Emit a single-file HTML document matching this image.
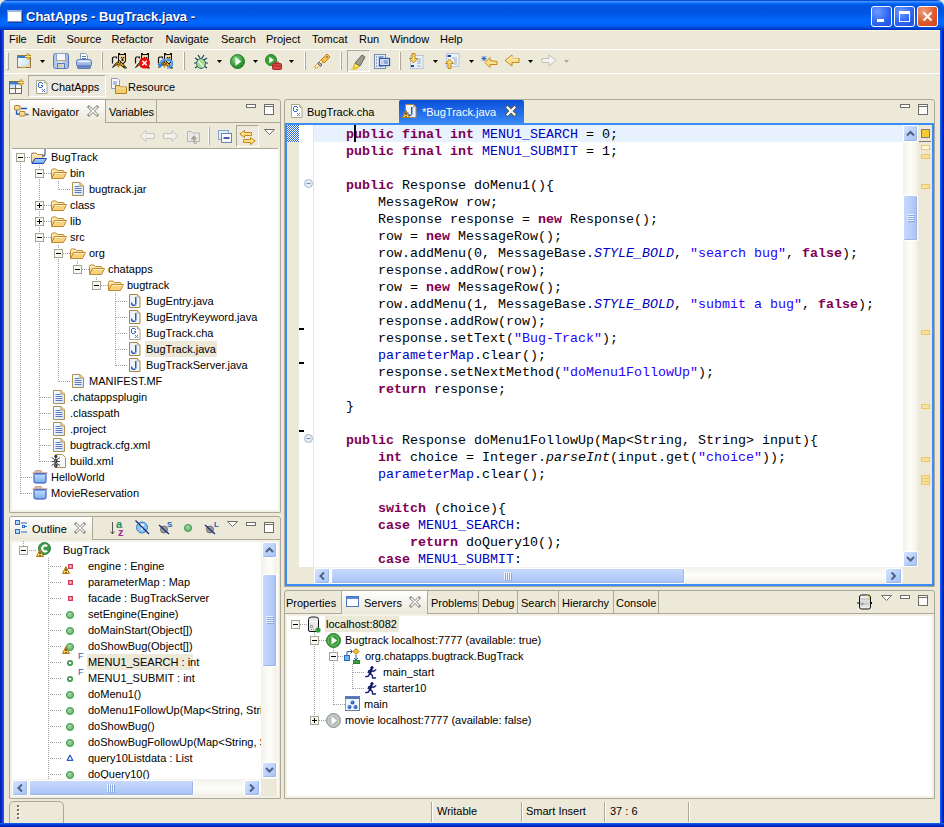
<!DOCTYPE html><html><head><meta charset="utf-8"><style>
*{margin:0;padding:0;box-sizing:border-box}
html,body{width:944px;height:827px;overflow:hidden;background:#ECE9D8;font-family:"Liberation Sans",sans-serif;font-size:11px;color:#000;position:relative}
.abs{position:absolute}
svg.abs{overflow:visible}
.t{position:absolute;white-space:pre;line-height:13px}
body{-webkit-font-smoothing:antialiased}
.m{position:absolute;white-space:pre;font-family:"Liberation Mono",monospace;font-size:13.33px;line-height:17px;left:314px}
.k{color:#7F0055;font-weight:bold}
.f{color:#0000C0}
.s{color:#2A00FF}
.i{font-style:italic}
</style></head><body>
<div class="abs" style="left:0px;top:0px;width:944px;height:30px;border-radius:7px 7px 0 0;background:linear-gradient(#0A4ED8 0px,#0A4ED8 0.5px,#3D8EFF 1.5px,#2A80FF 2.5px,#006AF8 3.5px,#0058E6 5px,#0053DF 8px,#0055E2 13px,#0062F2 18px,#0067FF 21px,#0064FA 25px,#0054E6 27px,#0040D0 28.5px,#0030B8 30px)"></div>
<div class="abs" style="left:4px;top:30px;width:936px;height:1px;background:#FFF6DC"></div>
<div class="abs" style="left:0px;top:30px;width:4px;height:797px;background:linear-gradient(90deg,#0019A8,#0831D9 2px,#166AEE 4px)"></div>
<div class="abs" style="left:940px;top:30px;width:4px;height:797px;background:linear-gradient(90deg,#166AEE,#0831D9 2px,#0019A8 4px)"></div>
<div class="abs" style="left:0px;top:823px;width:944px;height:4px;background:linear-gradient(#166AEE,#0831D9 2px,#0019A8 4px)"></div>
<div class="abs" style="left:7px;top:10px;width:15px;height:12px;background:#fff;border:1px solid #7A94C8;border-top:2px solid #9DB4E6;box-shadow:1px 1px 0 #1A3FA0"></div>
<div class="t" style="left:26px;top:9px;font-size:13px;line-height:16px;font-weight:bold;color:#fff;text-shadow:1px 1px 0 #0A1E7A">ChatApps - BugTrack.java -</div>
<div class="abs" style="left:871px;top:6px;width:21px;height:21px;border:1px solid #fff;border-radius:3px;background:radial-gradient(circle at 30% 25%,#6C9BFF,#2B63F0 60%,#1E4FD8)"></div>
<div class="abs" style="left:894px;top:6px;width:21px;height:21px;border:1px solid #fff;border-radius:3px;background:radial-gradient(circle at 30% 25%,#6C9BFF,#2B63F0 60%,#1E4FD8)"></div>
<div class="abs" style="left:917px;top:6px;width:21px;height:21px;border:1px solid #fff;border-radius:3px;background:radial-gradient(circle at 30% 25%,#F0A080,#E05A2E 55%,#C8401A)"></div>
<div class="abs" style="left:877px;top:19px;width:7px;height:3px;background:#fff"></div>
<div class="abs" style="left:899px;top:11px;width:11px;height:11px;border:1px solid #fff;border-top:3px solid #fff"></div>
<svg class="abs" style="left:922px;top:11px" width="11" height="11" viewBox="0 0 11 11"><path d="M1.5 1.5L9.5 9.5M9.5 1.5L1.5 9.5" stroke="#fff" stroke-width="2"/></svg>
<div class="abs" style="left:4px;top:49px;width:936px;height:1px;background:#fff"></div>
<div class="t" style="left:9px;top:33px;">File</div>
<div class="t" style="left:36.5px;top:33px;">Edit</div>
<div class="t" style="left:66.5px;top:33px;">Source</div>
<div class="t" style="left:111.5px;top:33px;">Refactor</div>
<div class="t" style="left:165.5px;top:33px;">Navigate</div>
<div class="t" style="left:221px;top:33px;">Search</div>
<div class="t" style="left:266px;top:33px;">Project</div>
<div class="t" style="left:312px;top:33px;">Tomcat</div>
<div class="t" style="left:359px;top:33px;">Run</div>
<div class="t" style="left:390px;top:33px;">Window</div>
<div class="t" style="left:440px;top:33px;">Help</div>
<div class="abs" style="left:4px;top:73px;width:936px;height:1px;background:#fff"></div>
<div class="abs" style="left:6px;top:52px;width:3px;height:18px;border-left:1px solid #fff;border-right:1px solid #ACA899;border-bottom:1px solid #ACA899;border-top:1px solid #fff"></div>
<div class="abs" style="left:101px;top:52px;width:1px;height:18px;background:#fff"></div>
<div class="abs" style="left:102px;top:52px;width:1px;height:18px;background:#ACA899"></div>
<div class="abs" style="left:183px;top:52px;width:1px;height:18px;background:#fff"></div>
<div class="abs" style="left:184px;top:52px;width:1px;height:18px;background:#ACA899"></div>
<div class="abs" style="left:304px;top:52px;width:1px;height:18px;background:#fff"></div>
<div class="abs" style="left:305px;top:52px;width:1px;height:18px;background:#ACA899"></div>
<div class="abs" style="left:340px;top:52px;width:1px;height:18px;background:#fff"></div>
<div class="abs" style="left:341px;top:52px;width:1px;height:18px;background:#ACA899"></div>
<div class="abs" style="left:399px;top:52px;width:1px;height:18px;background:#fff"></div>
<div class="abs" style="left:400px;top:52px;width:1px;height:18px;background:#ACA899"></div>
<svg class="abs" style="left:17px;top:53px" width="16" height="16" viewBox="0 0 16 16"><defs><linearGradient id="nw" x1="0" y1="0" x2="1" y2="1"><stop offset="0" stop-color="#F8FCFF"/><stop offset="1" stop-color="#C8E0F4"/></linearGradient></defs><rect x="0.5" y="2.5" width="13" height="12" fill="url(#nw)" stroke="#9A7A40"/><rect x="1" y="3" width="8" height="2" fill="#3A7AD0"/><path d="M12.5 4v6q0 3-4 4h-5" stroke="#F0C850" fill="none"/><path d="M11 0.5v6M8 3.5h6" stroke="#B08020" stroke-width="2.6"/><path d="M11 0.5v6M8 3.5h6" stroke="#FFE070" stroke-width="1"/></svg>
<svg class="abs" style="left:40px;top:60px" width="5" height="3" viewBox="0 0 5 3"><path d="M0 0h5l-2.5 3z" fill="#000"/></svg>
<svg class="abs" style="left:53px;top:53px" width="16" height="16" viewBox="0 0 16 16"><defs><linearGradient id="sv" x1="0" y1="0" x2="1" y2="0"><stop offset="0" stop-color="#A8BEE8"/><stop offset="0.5" stop-color="#D8E4F8"/><stop offset="1" stop-color="#98B0DC"/></linearGradient></defs><rect x="0.5" y="0.5" width="15" height="15" rx="2" fill="url(#sv)" stroke="#5A7AB8"/><rect x="3.5" y="0.5" width="9" height="7" fill="#F4F8FE" stroke="#8AA0C8"/><path d="M4 7.5h8" stroke="#D0A860"/><rect x="4.5" y="10.5" width="7" height="5" fill="#C8D8F0" stroke="#5A7AB8"/><rect x="5.5" y="12" width="3" height="2" fill="#E8C070"/></svg>
<svg class="abs" style="left:76px;top:53px" width="16" height="16" viewBox="0 0 16 16"><defs><linearGradient id="pr" x1="0" y1="0" x2="0" y2="1"><stop offset="0" stop-color="#D8E4F8"/><stop offset="1" stop-color="#7E9CD8"/></linearGradient></defs><path d="M4.5 0.5h5l2 2v6h-7z" fill="#fff" stroke="#8A9AB8"/><path d="M6 3.5h4M6 5.5h4" stroke="#5A7AC0"/><rect x="0.5" y="6.5" width="15" height="7" rx="2" fill="url(#pr)" stroke="#5A78B8"/><rect x="1.5" y="13" width="13" height="2.5" rx="1" fill="#6A8ACC" stroke="#4A68A8" stroke-width="0.8"/><path d="M3 8.5h10" stroke="#fff" stroke-opacity="0.7"/></svg>
<svg class="abs" style="left:111px;top:53px" width="16" height="16" viewBox="0 0 16 16"><path d="M7 0h2v1h4V0h2v8.5L12.5 11h-1.5L7 8z" fill="#111"/><path d="M8 2h6v6l-2 2h-1L8 7.5z" fill="#F2D49A"/><rect x="8.2" y="2" width="1" height="1" fill="#F0A0A0"/><rect x="10" y="4" width="1.2" height="1.2" fill="#111"/><rect x="12" y="4" width="1.2" height="1.2" fill="#111"/><path d="M11.5 5.5v2.5M10.3 7h2.4" stroke="#111" stroke-width="1.1"/><path d="M1.5 14.5L4 11L8.5 7.5L11 10L15.5 15h-2L9.5 12H5z" fill="#F4B010" stroke="#111" stroke-width="0.9" stroke-linejoin="round"/><rect x="7" y="9" width="1" height="1" fill="#111"/><rect x="8.5" y="10" width="1" height="1" fill="#111"/><rect x="6" y="10.5" width="1" height="1" fill="#111"/><rect x="9" y="8.5" width="1" height="1" fill="#111"/><path d="M5.5 5.5V4H2.5L1.5 5v5.5" stroke="#111" stroke-width="1.2" fill="none"/><path d="M6.5 12.5L8 14.5" stroke="#E89000" stroke-width="1.4"/><path d="M12 13l2 1.5" stroke="#111" stroke-width="1"/></svg>
<svg class="abs" style="left:134px;top:53px" width="16" height="16" viewBox="0 0 16 16"><path d="M7 0h2v1h4V0h2v8.5L12.5 11h-1.5L7 8z" fill="#111"/><path d="M8 2h6v6l-2 2h-1L8 7.5z" fill="#F2D49A"/><rect x="8.2" y="2" width="1" height="1" fill="#F0A0A0"/><rect x="10" y="4" width="1.2" height="1.2" fill="#111"/><rect x="12" y="4" width="1.2" height="1.2" fill="#111"/><path d="M11.5 5.5v2.5M10.3 7h2.4" stroke="#111" stroke-width="1.1"/><path d="M1.5 14.5L4 11L8.5 7.5L11 10L15.5 15h-2L9.5 12H5z" fill="#F4B010" stroke="#111" stroke-width="0.9" stroke-linejoin="round"/><rect x="7" y="9" width="1" height="1" fill="#111"/><rect x="8.5" y="10" width="1" height="1" fill="#111"/><rect x="6" y="10.5" width="1" height="1" fill="#111"/><rect x="9" y="8.5" width="1" height="1" fill="#111"/><path d="M5.5 5.5V4H2.5L1.5 5v5.5" stroke="#111" stroke-width="1.2" fill="none"/><path d="M6.5 12.5L8 14.5" stroke="#E89000" stroke-width="1.4"/><path d="M12 13l2 1.5" stroke="#111" stroke-width="1"/><circle cx="10.5" cy="10" r="5.5" fill="#EE0A0A"/><path d="M8.3 7.8l4.4 4.4M12.7 7.8l-4.4 4.4" stroke="#fff" stroke-width="1.6"/></svg>
<svg class="abs" style="left:157px;top:53px" width="16" height="16" viewBox="0 0 16 16"><path d="M7 0h2v1h4V0h2v8.5L12.5 11h-1.5L7 8z" fill="#111"/><path d="M8 2h6v6l-2 2h-1L8 7.5z" fill="#F2D49A"/><rect x="8.2" y="2" width="1" height="1" fill="#F0A0A0"/><rect x="10" y="4" width="1.2" height="1.2" fill="#111"/><rect x="12" y="4" width="1.2" height="1.2" fill="#111"/><path d="M11.5 5.5v2.5M10.3 7h2.4" stroke="#111" stroke-width="1.1"/><path d="M1.5 14.5L4 11L8.5 7.5L11 10L15.5 15h-2L9.5 12H5z" fill="#F4B010" stroke="#111" stroke-width="0.9" stroke-linejoin="round"/><rect x="7" y="9" width="1" height="1" fill="#111"/><rect x="8.5" y="10" width="1" height="1" fill="#111"/><rect x="6" y="10.5" width="1" height="1" fill="#111"/><rect x="9" y="8.5" width="1" height="1" fill="#111"/><path d="M5.5 5.5V4H2.5L1.5 5v5.5" stroke="#111" stroke-width="1.2" fill="none"/><path d="M6.5 12.5L8 14.5" stroke="#E89000" stroke-width="1.4"/><path d="M12 13l2 1.5" stroke="#111" stroke-width="1"/><path d="M3 13.5q0-7 7-7q5 0 5 4q0 4-5 4" stroke="#1E78E8" stroke-width="2.2" fill="none"/><path d="M3 13.5q0-7 7-7q5 0 5 4q0 4-5 4" stroke="#8CD4FF" stroke-width="0.8" fill="none"/><path d="M0.5 11l2.5 4 3-3.5z" fill="#1E78E8"/></svg>
<svg class="abs" style="left:193px;top:54px" width="16" height="16" viewBox="0 0 16 16"><path d="M2 4l3 2M1 9h3M2 14l3-2M14 4l-3 2M15 9h-3M14 14l-3-2M5 1l2 3M11 1l-2 3" stroke="#1A3A4A" stroke-width="1.2"/><ellipse cx="8" cy="9.5" rx="4.5" ry="5" fill="#A8D890" stroke="#2A6A7A"/><path d="M5.5 7l5 6" stroke="#E8F8D8" stroke-width="1.5"/></svg>
<svg class="abs" style="left:217px;top:60px" width="5" height="3" viewBox="0 0 5 3"><path d="M0 0h5l-2.5 3z" fill="#000"/></svg>
<svg class="abs" style="left:230px;top:54px" width="15" height="15" viewBox="0 0 15 15"><defs><radialGradient id="rg" cx="0.4" cy="0.35" r="0.7"><stop offset="0" stop-color="#8ED88E"/><stop offset="0.6" stop-color="#3AA03A"/><stop offset="1" stop-color="#207A20"/></radialGradient></defs><circle cx="7.5" cy="7.5" r="7" fill="url(#rg)" stroke="#2A802A"/><path d="M5.5 3.2L11.2 7.5L5.5 11.8Z" fill="#fff"/><path d="M5.5 3.2L11.2 7.5L5.5 7.5Z" fill="#E0F8E0"/></svg>
<svg class="abs" style="left:253px;top:60px" width="5" height="3" viewBox="0 0 5 3"><path d="M0 0h5l-2.5 3z" fill="#000"/></svg>
<svg class="abs" style="left:265px;top:54px" width="17" height="16" viewBox="0 0 17 16"><circle cx="6" cy="6" r="5.5" fill="#3AA03A" stroke="#2A802A"/><path d="M4.3 2.8L8.8 6L4.3 9.2Z" fill="#fff"/><rect x="7.5" y="9.5" width="9" height="6" rx="1" fill="#D84848" stroke="#A82828"/><path d="M10.5 9.5v-1.5h3v1.5M8 12h8" stroke="#A82828" fill="none"/></svg>
<svg class="abs" style="left:289px;top:60px" width="5" height="3" viewBox="0 0 5 3"><path d="M0 0h5l-2.5 3z" fill="#000"/></svg>
<svg class="abs" style="left:314px;top:54px" width="17" height="15" viewBox="0 0 17 15"><path d="M3 14l-2 0 0-2 9-9 2 2z" fill="#FFF6C0" stroke="#D8A030"/><path d="M3.5 9.5l3 3 1.5-1.5-3-3z" fill="#A8A8B8" stroke="#6A6A78"/><path d="M7 6l3 3 6-6-3-3z" fill="#F8C050" stroke="#C88020"/><circle cx="13" cy="3" r="0.8" fill="#2A4A9A"/></svg>
<div class="abs" style="left:347px;top:50px;width:23px;height:22px;border:1px solid #ACA899;border-right-color:#fff;border-bottom-color:#fff;background:repeating-conic-gradient(#F4F2EA 0 25%,#E4E1D2 0 50%) 0 0/2px 2px"></div>
<svg class="abs" style="left:350px;top:54px" width="17" height="16" viewBox="0 0 17 16"><path d="M3 14l2-5 5 3-2 2z" fill="#F8E060" stroke="#D0B020"/><path d="M5 9l7-8 3 2-5 9z" fill="#9A9A8A" stroke="#6A6A5A"/><path d="M1 15h6" stroke="#E8C830" stroke-width="1.5"/></svg>
<svg class="abs" style="left:374px;top:54px" width="16" height="15" viewBox="0 0 16 15"><rect x="0.5" y="0.5" width="11" height="14" fill="#E8EEF8" stroke="#7A8AB0"/><path d="M2 3h1M4.5 3h5M2 6h1M2 9h1M2 12h1M4.5 12h5" stroke="#3A5AA0"/><rect x="5.5" y="4.5" width="10" height="7" fill="#F4F8FE" stroke="#2A5AB8" stroke-width="1.3"/><path d="M7.5 7h1M9.5 7h4.5M7.5 9h1M9.5 9h4.5" stroke="#2A5AB8"/></svg>
<svg class="abs" style="left:409px;top:53px" width="15" height="16" viewBox="0 0 15 16"><rect x="1.5" y="2.5" width="12.5" height="13" fill="#EEF2F8" stroke="#B8C4D8"/><path d="M8 6h4M8 8h4M8 10h4M8 13h4" stroke="#9AAAC8"/><rect x="2" y="12" width="3" height="2" fill="#1A4A9A"/><path d="M3 0.5h3v5h2.5l-4 4.5-4-4.5h2.5z" fill="#F8D870" stroke="#C08818"/></svg>
<svg class="abs" style="left:433px;top:60px" width="5" height="3" viewBox="0 0 5 3"><path d="M0 0h5l-2.5 3z" fill="#000"/></svg>
<svg class="abs" style="left:445px;top:53px" width="15" height="16" viewBox="0 0 15 16"><rect x="1.5" y="0.5" width="12.5" height="13" fill="#EEF2F8" stroke="#B8C4D8"/><path d="M7 5h5M9 7h3M9 9h3M9 11h3" stroke="#9AAAC8"/><rect x="2.5" y="2" width="3.5" height="2" fill="#1A4A9A"/><path d="M3 15.5h3v-5h2.5l-4-4.5-4 4.5h2.5z" fill="#F8D870" stroke="#C08818"/></svg>
<svg class="abs" style="left:469px;top:60px" width="5" height="3" viewBox="0 0 5 3"><path d="M0 0h5l-2.5 3z" fill="#000"/></svg>
<svg class="abs" style="left:481px;top:55px" width="17" height="13" viewBox="0 0 17 13"><path d="M16 6.5v3h-7v3L4 7.5 9 2.5v3z" fill="#FBE08A" stroke="#C8881A"/><path d="M3 1v5M0.5 3.5h5M1 1.5l4 4M5 1.5l-4 4" stroke="#2A5AB8" stroke-width="0.9"/></svg>
<svg class="abs" style="left:504px;top:54px" width="16" height="13" viewBox="0 0 16 13"><path d="M15 4.5v4h-7v3.5L1 6.5 8 1v3.5z" fill="#FBE08A" stroke="#C8881A"/><path d="M3 6.5l5-4v2.5h6" stroke="#FFF8D8" fill="none"/></svg>
<svg class="abs" style="left:528px;top:60px" width="5" height="3" viewBox="0 0 5 3"><path d="M0 0h5l-2.5 3z" fill="#000"/></svg>
<svg class="abs" style="left:541px;top:54px" width="16" height="13" viewBox="0 0 16 13"><path d="M1 4.5v4h7v3.5l7-5.5L8 1v3.5z" fill="#F4F4F2" stroke="#C0C0BA"/></svg>
<svg class="abs" style="left:564px;top:60px" width="5" height="3" viewBox="0 0 5 3"><path d="M0 0h5l-2.5 3z" fill="#A8A8A0"/></svg>
<div class="abs" style="left:28px;top:75px;width:78px;height:22px;border:1px solid #ACA899;border-right-color:#fff;border-bottom-color:#fff;background:repeating-conic-gradient(#F4F2EA 0 25%,#E4E1D2 0 50%) 0 0/2px 2px"></div>
<div class="t" style="left:51px;top:81px;">ChatApps</div>
<div class="t" style="left:128px;top:81px;">Resource</div>
<svg class="abs" style="left:9px;top:79px" width="16" height="15" viewBox="0 0 16 15"><rect x="0.5" y="2.5" width="12" height="12" fill="#F4F8FC" stroke="#7A6A4A"/><rect x="1" y="3" width="11" height="2.5" fill="#3A7AD0"/><path d="M6.5 5.5v9M1 9.5h11.5" stroke="#7A6A4A"/><rect x="1" y="6" width="5" height="3" fill="#D8E8F8"/><path d="M12 0.5v6M9 3.5h6" stroke="#B08020" stroke-width="2.6"/><path d="M12 0.5v6M9 3.5h6" stroke="#FFE070" stroke-width="1"/></svg>
<svg class="abs" style="left:36px;top:80px" width="12" height="14" viewBox="0 0 12 14">
<path d="M0.5 0.5h8l2.5 2.5v10.5h-10.5z" fill="#FFFFFF" stroke="#A8A88A"/>
<path d="M8.5 0.5v2.5h2.5" fill="#E8E8D8" stroke="#A8A88A"/>
<g fill="#3A6CC8"><rect x="3" y="2" width="3" height="1"/><rect x="2" y="3" width="1" height="4"/><rect x="3" y="7" width="3" height="1"/><rect x="6" y="5" width="1" height="2"/><rect x="5" y="5" width="1" height="1"/><rect x="6" y="3" width="1" height="1"/></g>
<g fill="#4A7CD8"><rect x="6" y="9" width="1" height="1"/><rect x="8" y="9" width="1" height="1"/><rect x="7" y="10" width="1" height="1"/><rect x="6" y="11" width="1" height="1"/><rect x="8" y="11" width="1" height="1"/></g>
</svg>
<svg class="abs" style="left:111px;top:78px" width="17" height="16" viewBox="0 0 17 16"><path d="M0.5 0.5h6l2 2v8h-8z" fill="#F8F8F8" stroke="#8A9AB8"/><path d="M2 4h4M2 6h4" stroke="#6A8AC8"/><path d="M4.5 7.5h4l1 1.5h6v6.5h-11z" fill="#F4CE70" stroke="#B08020"/><path d="M5 10h10" stroke="#FCE8B0"/></svg>
<div class="abs" style="left:9px;top:99px;width:272px;height:414px;border:1px solid #ACA899;border-radius:3px 3px 0 0;background:#ECE9D8"></div>
<div class="abs" style="left:9px;top:516px;width:272px;height:283px;border:1px solid #ACA899;border-radius:3px 3px 0 0;background:#ECE9D8"></div>
<div class="abs" style="left:284px;top:99px;width:651px;height:488px;border:1px solid #ACA899;border-radius:3px 3px 0 0;background:#ECE9D8"></div>
<div class="abs" style="left:284px;top:590px;width:651px;height:209px;border:1px solid #ACA899;border-radius:3px 3px 0 0;background:#ECE9D8"></div>
<div class="abs" style="left:10px;top:100px;width:95px;height:22px;border-radius:2px 0 0 0;background:linear-gradient(#FFFFFF,#F6F5EF 40%,#ECE9D8)"></div>
<div class="abs" style="left:105px;top:100px;width:1px;height:23px;background:#ACA899"></div>
<div class="abs" style="left:156px;top:100px;width:1px;height:23px;background:#ACA899"></div>
<div class="abs" style="left:105px;top:122px;width:175px;height:1px;background:#ACA899"></div>

<svg class="abs" style="left:14px;top:105px" width="16" height="12" viewBox="0 0 16 12"><path d="M2.5 4.5v4.5h3" stroke="#1E5AB4" stroke-width="1.3" fill="none"/><path d="M7 3.5h6M11.5 9.5h3" stroke="#1E5AB4" stroke-width="1.3"/><rect x="0.5" y="0.5" width="5.5" height="4.5" rx="0.8" fill="#F8DC90" stroke="#B87A30"/><rect x="5.5" y="6.5" width="5.5" height="4.5" rx="0.8" fill="#F8DC90" stroke="#B87A30"/></svg>
<div class="t" style="left:32px;top:106px;">Navigator</div>
<svg class="abs" style="left:88px;top:106px" width="10" height="10" viewBox="0 0 10 10"><path d="M1 1l8 8M9 1l-8 8" stroke="#8C8A80" stroke-width="3" stroke-linecap="square"/><path d="M1 1l8 8M9 1l-8 8" stroke="#fff" stroke-width="1.2"/></svg>
<div class="t" style="left:109px;top:106px;">Variables</div>
<div class="abs" style="left:246px;top:104px;width:10px;height:4px;border:1px solid #6F6E66;background:#fff"></div>
<div class="abs" style="left:264px;top:104px;width:10px;height:11px;border:1px solid #6F6E66;background:#fff"></div>
<div class="abs" style="left:265px;top:106px;width:8px;height:1px;background:#6F6E66"></div>
<svg class="abs" style="left:140px;top:130px" width="16" height="12" viewBox="0 0 16 12"><path d="M0.5 6L6 0.5V3.5H14.5V8.5H6V11.5Z" fill="#F0F0EC" stroke="#C4C4BC"/></svg>
<svg class="abs" style="left:162px;top:130px" width="16" height="12" viewBox="0 0 16 12"><path d="M15.5 6L10 0.5V3.5H1.5V8.5H10V11.5Z" fill="#F0F0EC" stroke="#C4C4BC"/></svg>
<svg class="abs" style="left:187px;top:129px" width="14" height="15" viewBox="0 0 14 15"><path d="M0.5 2.5h4l1 1.5h7v8.5h-12z" fill="#E8E8E4" stroke="#B8B8B0"/><path d="M7 13.5v-5M4.5 10.5l2.5-3 2.5 3" stroke="#A0A098" fill="none" stroke-width="1.6"/><path d="M7 14.5q2 0 3-1" stroke="#A0A098" fill="none"/></svg>
<div class="abs" style="left:208px;top:127px;width:1px;height:18px;background:#fff"></div>
<div class="abs" style="left:209px;top:127px;width:1px;height:18px;background:#ACA899"></div>
<svg class="abs" style="left:218px;top:130px" width="14" height="13" viewBox="0 0 14 13"><rect x="0.5" y="0.5" width="10" height="9" fill="#E4ECF8" stroke="#8AA4D0"/><rect x="3.5" y="3.5" width="10" height="9" fill="#F8FAFE" stroke="#6A84B8"/><path d="M5.5 8h6" stroke="#1A3A8A" stroke-width="1.6"/></svg>
<div class="abs" style="left:236px;top:125px;width:23px;height:22px;border:1px solid #ACA899;border-right-color:#fff;border-bottom-color:#fff;background:repeating-conic-gradient(#F4F2EA 0 25%,#E4E1D2 0 50%) 0 0/2px 2px"></div>
<svg class="abs" style="left:239px;top:130px" width="17" height="15" viewBox="0 0 17 15"><path d="M0.8 4L5.5 0.5V2.5H12.5V5.5H5.5V7.5Z" fill="#FBE08A" stroke="#C8861A" stroke-linejoin="round"/><path d="M16.2 11L11.5 7.5V9.5H4.5V12.5H11.5V14.5Z" fill="#FBE08A" stroke="#C8861A" stroke-linejoin="round"/></svg>
<svg class="abs" style="left:264px;top:129px" width="11" height="6" viewBox="0 0 11 6"><path d="M0.5 0.5h10l-5 5z" fill="#fff" stroke="#6F6E66"/></svg>
<div class="abs" style="left:10px;top:148px;width:270px;height:364px;border-left:2px solid #F3F1E6;border-right:2px solid #F3F1E6;border-bottom:2px solid #F3F1E6"></div>
<div class="abs" style="left:12px;top:148px;width:266px;height:362px;background:#fff;border-top:1px solid #ACA899"></div>
<div class="abs" style="left:20px;top:157px;width:1px;height:337px;background:repeating-linear-gradient(#A0A0A0 0 1px,transparent 1px 2px)"></div>
<div class="abs" style="left:39px;top:165px;width:1px;height:297px;background:repeating-linear-gradient(#A0A0A0 0 1px,transparent 1px 2px)"></div>
<div class="abs" style="left:58px;top:181px;width:1px;height:9px;background:repeating-linear-gradient(#A0A0A0 0 1px,transparent 1px 2px)"></div>
<div class="abs" style="left:58px;top:245px;width:1px;height:137px;background:repeating-linear-gradient(#A0A0A0 0 1px,transparent 1px 2px)"></div>
<div class="abs" style="left:77px;top:261px;width:1px;height:9px;background:repeating-linear-gradient(#A0A0A0 0 1px,transparent 1px 2px)"></div>
<div class="abs" style="left:96px;top:277px;width:1px;height:9px;background:repeating-linear-gradient(#A0A0A0 0 1px,transparent 1px 2px)"></div>
<div class="abs" style="left:115px;top:293px;width:1px;height:73px;background:repeating-linear-gradient(#A0A0A0 0 1px,transparent 1px 2px)"></div>
<div class="abs" style="left:21px;top:157px;width:11px;height:1px;background:repeating-linear-gradient(90deg,#A0A0A0 0 1px,transparent 1px 2px)"></div>
<div class="abs" style="left:40px;top:173px;width:11px;height:1px;background:repeating-linear-gradient(90deg,#A0A0A0 0 1px,transparent 1px 2px)"></div>
<div class="abs" style="left:59px;top:189px;width:11px;height:1px;background:repeating-linear-gradient(90deg,#A0A0A0 0 1px,transparent 1px 2px)"></div>
<div class="abs" style="left:40px;top:205px;width:11px;height:1px;background:repeating-linear-gradient(90deg,#A0A0A0 0 1px,transparent 1px 2px)"></div>
<div class="abs" style="left:40px;top:221px;width:11px;height:1px;background:repeating-linear-gradient(90deg,#A0A0A0 0 1px,transparent 1px 2px)"></div>
<div class="abs" style="left:40px;top:237px;width:11px;height:1px;background:repeating-linear-gradient(90deg,#A0A0A0 0 1px,transparent 1px 2px)"></div>
<div class="abs" style="left:59px;top:253px;width:11px;height:1px;background:repeating-linear-gradient(90deg,#A0A0A0 0 1px,transparent 1px 2px)"></div>
<div class="abs" style="left:78px;top:269px;width:11px;height:1px;background:repeating-linear-gradient(90deg,#A0A0A0 0 1px,transparent 1px 2px)"></div>
<div class="abs" style="left:97px;top:285px;width:11px;height:1px;background:repeating-linear-gradient(90deg,#A0A0A0 0 1px,transparent 1px 2px)"></div>
<div class="abs" style="left:116px;top:301px;width:11px;height:1px;background:repeating-linear-gradient(90deg,#A0A0A0 0 1px,transparent 1px 2px)"></div>
<div class="abs" style="left:116px;top:317px;width:11px;height:1px;background:repeating-linear-gradient(90deg,#A0A0A0 0 1px,transparent 1px 2px)"></div>
<div class="abs" style="left:116px;top:333px;width:11px;height:1px;background:repeating-linear-gradient(90deg,#A0A0A0 0 1px,transparent 1px 2px)"></div>
<div class="abs" style="left:116px;top:349px;width:11px;height:1px;background:repeating-linear-gradient(90deg,#A0A0A0 0 1px,transparent 1px 2px)"></div>
<div class="abs" style="left:116px;top:365px;width:11px;height:1px;background:repeating-linear-gradient(90deg,#A0A0A0 0 1px,transparent 1px 2px)"></div>
<div class="abs" style="left:59px;top:381px;width:11px;height:1px;background:repeating-linear-gradient(90deg,#A0A0A0 0 1px,transparent 1px 2px)"></div>
<div class="abs" style="left:40px;top:397px;width:11px;height:1px;background:repeating-linear-gradient(90deg,#A0A0A0 0 1px,transparent 1px 2px)"></div>
<div class="abs" style="left:40px;top:413px;width:11px;height:1px;background:repeating-linear-gradient(90deg,#A0A0A0 0 1px,transparent 1px 2px)"></div>
<div class="abs" style="left:40px;top:429px;width:11px;height:1px;background:repeating-linear-gradient(90deg,#A0A0A0 0 1px,transparent 1px 2px)"></div>
<div class="abs" style="left:40px;top:445px;width:11px;height:1px;background:repeating-linear-gradient(90deg,#A0A0A0 0 1px,transparent 1px 2px)"></div>
<div class="abs" style="left:40px;top:461px;width:11px;height:1px;background:repeating-linear-gradient(90deg,#A0A0A0 0 1px,transparent 1px 2px)"></div>
<div class="abs" style="left:21px;top:477px;width:11px;height:1px;background:repeating-linear-gradient(90deg,#A0A0A0 0 1px,transparent 1px 2px)"></div>
<div class="abs" style="left:21px;top:493px;width:11px;height:1px;background:repeating-linear-gradient(90deg,#A0A0A0 0 1px,transparent 1px 2px)"></div>
<svg class="abs" style="left:16px;top:153px" width="9" height="9" viewBox="0 0 9 9">
<rect x="0.5" y="0.5" width="8" height="8" fill="#F8F8F4" stroke="#A8A494"/>
<path d="M2 4.5h5" stroke="#000"/>
</svg>
<svg class="abs" style="left:31px;top:149px" width="17" height="16" viewBox="0 0 17 16">
<defs><linearGradient id="po" x1="0" y1="0" x2="0" y2="1"><stop offset="0" stop-color="#FFF2C8"/><stop offset="1" stop-color="#F0C870"/></linearGradient>
<linearGradient id="pf" x1="0" y1="0" x2="0" y2="1"><stop offset="0" stop-color="#A8D0FF"/><stop offset="1" stop-color="#78A8E8"/></linearGradient></defs>
<path d="M0.5 14V5.5q0-1.5 1.5-1.5h3l1.5 1.5h5.5v3" fill="url(#po)" stroke="#B88838"/>
<path d="M0.5 4.5h2" stroke="#8A6A9A"/>
<path d="M1 14.5L4 9.5H15.5L12.5 14.5Z" fill="url(#pf)" stroke="#1E40C0" stroke-linejoin="round"/>
<path d="M14 0v5q0 2-2 2h-1" stroke="#2A5A9A" fill="none" stroke-width="1.1"/>
</svg>
<div class="t" style="left:51px;top:151px;">BugTrack</div>
<svg class="abs" style="left:35px;top:169px" width="9" height="9" viewBox="0 0 9 9">
<rect x="0.5" y="0.5" width="8" height="8" fill="#F8F8F4" stroke="#A8A494"/>
<path d="M2 4.5h5" stroke="#000"/>
</svg>
<svg class="abs" style="left:51px;top:168px" width="17" height="13" viewBox="0 0 17 13">
<defs><linearGradient id="fo" x1="0" y1="0" x2="0" y2="1"><stop offset="0" stop-color="#FFF2C8"/><stop offset="1" stop-color="#F0C870"/></linearGradient></defs>
<path d="M0.5 10V2.5q0-1.5 1.5-1.5h3l1.5 1.5h5.5q1 0 1 1v1.5" fill="url(#fo)" stroke="#C08830"/>
<path d="M0.5 10.5L3.5 4.5H15.5L12.5 10.5Z" fill="#F8D27A" stroke="#C08830" stroke-linejoin="round"/>
<path d="M4 5.5H14.5" stroke="#FFF0C0"/>
</svg>
<div class="t" style="left:70px;top:167px;">bin</div>
<svg class="abs" style="left:72px;top:182px" width="12" height="14" viewBox="0 0 12 14">
<defs><linearGradient id="dg" x1="0" y1="0" x2="1" y2="1"><stop offset="0" stop-color="#FFFFFF"/><stop offset="1" stop-color="#D4E2F6"/></linearGradient></defs>
<path d="M0.5 0.5h7.5l3.5 3.5v9.5h-11z" fill="url(#dg)" stroke="#AE9252"/>
<path d="M8 0.5v3.5h3.5" fill="#F2DFA8" stroke="#AE9252"/>
<path d="M2.5 4.5h5M2.5 6.5h7M2.5 8.5h7M2.5 10.5h7" stroke="#5A7EC0"/>
</svg>
<div class="t" style="left:89px;top:183px;">bugtrack.jar</div>
<svg class="abs" style="left:35px;top:201px" width="9" height="9" viewBox="0 0 9 9">
<rect x="0.5" y="0.5" width="8" height="8" fill="#F8F8F4" stroke="#A8A494"/>
<path d="M2 4.5h5" stroke="#000"/><path d="M4.5 2v5" stroke="#000"/>
</svg>
<svg class="abs" style="left:51px;top:200px" width="17" height="13" viewBox="0 0 17 13">
<defs><linearGradient id="fo" x1="0" y1="0" x2="0" y2="1"><stop offset="0" stop-color="#FFF2C8"/><stop offset="1" stop-color="#F0C870"/></linearGradient></defs>
<path d="M0.5 10V2.5q0-1.5 1.5-1.5h3l1.5 1.5h5.5q1 0 1 1v1.5" fill="url(#fo)" stroke="#C08830"/>
<path d="M0.5 10.5L3.5 4.5H15.5L12.5 10.5Z" fill="#F8D27A" stroke="#C08830" stroke-linejoin="round"/>
<path d="M4 5.5H14.5" stroke="#FFF0C0"/>
</svg>
<div class="t" style="left:70px;top:199px;">class</div>
<svg class="abs" style="left:35px;top:217px" width="9" height="9" viewBox="0 0 9 9">
<rect x="0.5" y="0.5" width="8" height="8" fill="#F8F8F4" stroke="#A8A494"/>
<path d="M2 4.5h5" stroke="#000"/><path d="M4.5 2v5" stroke="#000"/>
</svg>
<svg class="abs" style="left:51px;top:216px" width="17" height="13" viewBox="0 0 17 13">
<defs><linearGradient id="fo" x1="0" y1="0" x2="0" y2="1"><stop offset="0" stop-color="#FFF2C8"/><stop offset="1" stop-color="#F0C870"/></linearGradient></defs>
<path d="M0.5 10V2.5q0-1.5 1.5-1.5h3l1.5 1.5h5.5q1 0 1 1v1.5" fill="url(#fo)" stroke="#C08830"/>
<path d="M0.5 10.5L3.5 4.5H15.5L12.5 10.5Z" fill="#F8D27A" stroke="#C08830" stroke-linejoin="round"/>
<path d="M4 5.5H14.5" stroke="#FFF0C0"/>
</svg>
<div class="t" style="left:70px;top:215px;">lib</div>
<svg class="abs" style="left:35px;top:233px" width="9" height="9" viewBox="0 0 9 9">
<rect x="0.5" y="0.5" width="8" height="8" fill="#F8F8F4" stroke="#A8A494"/>
<path d="M2 4.5h5" stroke="#000"/>
</svg>
<svg class="abs" style="left:51px;top:232px" width="17" height="13" viewBox="0 0 17 13">
<defs><linearGradient id="fo" x1="0" y1="0" x2="0" y2="1"><stop offset="0" stop-color="#FFF2C8"/><stop offset="1" stop-color="#F0C870"/></linearGradient></defs>
<path d="M0.5 10V2.5q0-1.5 1.5-1.5h3l1.5 1.5h5.5q1 0 1 1v1.5" fill="url(#fo)" stroke="#C08830"/>
<path d="M0.5 10.5L3.5 4.5H15.5L12.5 10.5Z" fill="#F8D27A" stroke="#C08830" stroke-linejoin="round"/>
<path d="M4 5.5H14.5" stroke="#FFF0C0"/>
</svg>
<div class="t" style="left:70px;top:231px;">src</div>
<svg class="abs" style="left:54px;top:249px" width="9" height="9" viewBox="0 0 9 9">
<rect x="0.5" y="0.5" width="8" height="8" fill="#F8F8F4" stroke="#A8A494"/>
<path d="M2 4.5h5" stroke="#000"/>
</svg>
<svg class="abs" style="left:70px;top:248px" width="17" height="13" viewBox="0 0 17 13">
<defs><linearGradient id="fo" x1="0" y1="0" x2="0" y2="1"><stop offset="0" stop-color="#FFF2C8"/><stop offset="1" stop-color="#F0C870"/></linearGradient></defs>
<path d="M0.5 10V2.5q0-1.5 1.5-1.5h3l1.5 1.5h5.5q1 0 1 1v1.5" fill="url(#fo)" stroke="#C08830"/>
<path d="M0.5 10.5L3.5 4.5H15.5L12.5 10.5Z" fill="#F8D27A" stroke="#C08830" stroke-linejoin="round"/>
<path d="M4 5.5H14.5" stroke="#FFF0C0"/>
</svg>
<div class="t" style="left:89px;top:247px;">org</div>
<svg class="abs" style="left:73px;top:265px" width="9" height="9" viewBox="0 0 9 9">
<rect x="0.5" y="0.5" width="8" height="8" fill="#F8F8F4" stroke="#A8A494"/>
<path d="M2 4.5h5" stroke="#000"/>
</svg>
<svg class="abs" style="left:89px;top:264px" width="17" height="13" viewBox="0 0 17 13">
<defs><linearGradient id="fo" x1="0" y1="0" x2="0" y2="1"><stop offset="0" stop-color="#FFF2C8"/><stop offset="1" stop-color="#F0C870"/></linearGradient></defs>
<path d="M0.5 10V2.5q0-1.5 1.5-1.5h3l1.5 1.5h5.5q1 0 1 1v1.5" fill="url(#fo)" stroke="#C08830"/>
<path d="M0.5 10.5L3.5 4.5H15.5L12.5 10.5Z" fill="#F8D27A" stroke="#C08830" stroke-linejoin="round"/>
<path d="M4 5.5H14.5" stroke="#FFF0C0"/>
</svg>
<div class="t" style="left:108px;top:263px;">chatapps</div>
<svg class="abs" style="left:92px;top:281px" width="9" height="9" viewBox="0 0 9 9">
<rect x="0.5" y="0.5" width="8" height="8" fill="#F8F8F4" stroke="#A8A494"/>
<path d="M2 4.5h5" stroke="#000"/>
</svg>
<svg class="abs" style="left:108px;top:280px" width="17" height="13" viewBox="0 0 17 13">
<defs><linearGradient id="fo" x1="0" y1="0" x2="0" y2="1"><stop offset="0" stop-color="#FFF2C8"/><stop offset="1" stop-color="#F0C870"/></linearGradient></defs>
<path d="M0.5 10V2.5q0-1.5 1.5-1.5h3l1.5 1.5h5.5q1 0 1 1v1.5" fill="url(#fo)" stroke="#C08830"/>
<path d="M0.5 10.5L3.5 4.5H15.5L12.5 10.5Z" fill="#F8D27A" stroke="#C08830" stroke-linejoin="round"/>
<path d="M4 5.5H14.5" stroke="#FFF0C0"/>
</svg>
<div class="t" style="left:127px;top:279px;">bugtrack</div>
<svg class="abs" style="left:129px;top:294px" width="12" height="14" viewBox="0 0 12 14">
<path d="M0.5 0.5h8l2.5 2.5v10.5h-10.5z" fill="#EEF4FC" stroke="#A8863E"/>
<path d="M8.5 0.5v2.5h2.5" fill="#F4D68C" stroke="#C8A050"/>
<g fill="#2E5CB0"><rect x="6" y="3" width="1.5" height="7.5"/><rect x="3" y="10.5" width="3.5" height="1.5"/><rect x="2" y="8.5" width="1.5" height="2.5"/></g>
</svg>
<div class="t" style="left:146px;top:295px;">BugEntry.java</div>
<svg class="abs" style="left:129px;top:310px" width="12" height="14" viewBox="0 0 12 14">
<path d="M0.5 0.5h8l2.5 2.5v10.5h-10.5z" fill="#EEF4FC" stroke="#A8863E"/>
<path d="M8.5 0.5v2.5h2.5" fill="#F4D68C" stroke="#C8A050"/>
<g fill="#2E5CB0"><rect x="6" y="3" width="1.5" height="7.5"/><rect x="3" y="10.5" width="3.5" height="1.5"/><rect x="2" y="8.5" width="1.5" height="2.5"/></g>
</svg>
<div class="t" style="left:146px;top:311px;">BugEntryKeyword.java</div>
<svg class="abs" style="left:129px;top:326px" width="12" height="14" viewBox="0 0 12 14">
<path d="M0.5 0.5h8l2.5 2.5v10.5h-10.5z" fill="#FFFFFF" stroke="#A8A88A"/>
<path d="M8.5 0.5v2.5h2.5" fill="#E8E8D8" stroke="#A8A88A"/>
<g fill="#3A6CC8"><rect x="3" y="2" width="3" height="1"/><rect x="2" y="3" width="1" height="4"/><rect x="3" y="7" width="3" height="1"/><rect x="6" y="5" width="1" height="2"/><rect x="5" y="5" width="1" height="1"/><rect x="6" y="3" width="1" height="1"/></g>
<g fill="#4A7CD8"><rect x="6" y="9" width="1" height="1"/><rect x="8" y="9" width="1" height="1"/><rect x="7" y="10" width="1" height="1"/><rect x="6" y="11" width="1" height="1"/><rect x="8" y="11" width="1" height="1"/></g>
</svg>
<div class="t" style="left:146px;top:327px;">BugTrack.cha</div>
<svg class="abs" style="left:129px;top:342px" width="12" height="14" viewBox="0 0 12 14">
<path d="M0.5 0.5h8l2.5 2.5v10.5h-10.5z" fill="#EEF4FC" stroke="#A8863E"/>
<path d="M8.5 0.5v2.5h2.5" fill="#F4D68C" stroke="#C8A050"/>
<g fill="#2E5CB0"><rect x="6" y="3" width="1.5" height="7.5"/><rect x="3" y="10.5" width="3.5" height="1.5"/><rect x="2" y="8.5" width="1.5" height="2.5"/></g>
</svg>
<div class="abs" style="left:145px;top:341px;width:72px;height:16px;background:#ECE9D8"></div>
<div class="t" style="left:146px;top:343px;">BugTrack.java</div>
<svg class="abs" style="left:129px;top:358px" width="12" height="14" viewBox="0 0 12 14">
<path d="M0.5 0.5h8l2.5 2.5v10.5h-10.5z" fill="#EEF4FC" stroke="#A8863E"/>
<path d="M8.5 0.5v2.5h2.5" fill="#F4D68C" stroke="#C8A050"/>
<g fill="#2E5CB0"><rect x="6" y="3" width="1.5" height="7.5"/><rect x="3" y="10.5" width="3.5" height="1.5"/><rect x="2" y="8.5" width="1.5" height="2.5"/></g>
</svg>
<div class="t" style="left:146px;top:359px;">BugTrackServer.java</div>
<svg class="abs" style="left:72px;top:374px" width="12" height="14" viewBox="0 0 12 14">
<defs><linearGradient id="dg" x1="0" y1="0" x2="1" y2="1"><stop offset="0" stop-color="#FFFFFF"/><stop offset="1" stop-color="#D4E2F6"/></linearGradient></defs>
<path d="M0.5 0.5h7.5l3.5 3.5v9.5h-11z" fill="url(#dg)" stroke="#AE9252"/>
<path d="M8 0.5v3.5h3.5" fill="#F2DFA8" stroke="#AE9252"/>
<path d="M2.5 4.5h5M2.5 6.5h7M2.5 8.5h7M2.5 10.5h7" stroke="#5A7EC0"/>
</svg>
<div class="t" style="left:89px;top:375px;">MANIFEST.MF</div>
<svg class="abs" style="left:53px;top:390px" width="12" height="14" viewBox="0 0 12 14">
<defs><linearGradient id="dg" x1="0" y1="0" x2="1" y2="1"><stop offset="0" stop-color="#FFFFFF"/><stop offset="1" stop-color="#D4E2F6"/></linearGradient></defs>
<path d="M0.5 0.5h7.5l3.5 3.5v9.5h-11z" fill="url(#dg)" stroke="#AE9252"/>
<path d="M8 0.5v3.5h3.5" fill="#F2DFA8" stroke="#AE9252"/>
<path d="M2.5 4.5h5M2.5 6.5h7M2.5 8.5h7M2.5 10.5h7" stroke="#5A7EC0"/>
</svg>
<div class="t" style="left:70px;top:391px;">.chatappsplugin</div>
<svg class="abs" style="left:53px;top:406px" width="12" height="14" viewBox="0 0 12 14">
<defs><linearGradient id="dg" x1="0" y1="0" x2="1" y2="1"><stop offset="0" stop-color="#FFFFFF"/><stop offset="1" stop-color="#D4E2F6"/></linearGradient></defs>
<path d="M0.5 0.5h7.5l3.5 3.5v9.5h-11z" fill="url(#dg)" stroke="#AE9252"/>
<path d="M8 0.5v3.5h3.5" fill="#F2DFA8" stroke="#AE9252"/>
<path d="M2.5 4.5h5M2.5 6.5h7M2.5 8.5h7M2.5 10.5h7" stroke="#5A7EC0"/>
</svg>
<div class="t" style="left:70px;top:407px;">.classpath</div>
<svg class="abs" style="left:53px;top:422px" width="12" height="14" viewBox="0 0 12 14">
<defs><linearGradient id="dg" x1="0" y1="0" x2="1" y2="1"><stop offset="0" stop-color="#FFFFFF"/><stop offset="1" stop-color="#D4E2F6"/></linearGradient></defs>
<path d="M0.5 0.5h7.5l3.5 3.5v9.5h-11z" fill="url(#dg)" stroke="#AE9252"/>
<path d="M8 0.5v3.5h3.5" fill="#F2DFA8" stroke="#AE9252"/>
<path d="M2.5 4.5h5M2.5 6.5h7M2.5 8.5h7M2.5 10.5h7" stroke="#5A7EC0"/>
</svg>
<div class="t" style="left:70px;top:423px;">.project</div>
<svg class="abs" style="left:53px;top:438px" width="12" height="14" viewBox="0 0 12 14">
<defs><linearGradient id="dg" x1="0" y1="0" x2="1" y2="1"><stop offset="0" stop-color="#FFFFFF"/><stop offset="1" stop-color="#D4E2F6"/></linearGradient></defs>
<path d="M0.5 0.5h7.5l3.5 3.5v9.5h-11z" fill="url(#dg)" stroke="#AE9252"/>
<path d="M8 0.5v3.5h3.5" fill="#F2DFA8" stroke="#AE9252"/>
<path d="M2.5 4.5h5M2.5 6.5h7M2.5 8.5h7M2.5 10.5h7" stroke="#5A7EC0"/>
</svg>
<div class="t" style="left:70px;top:439px;">bugtrack.cfg.xml</div>
<svg class="abs" style="left:51px;top:454px" width="15" height="14" viewBox="0 0 15 14">
<path d="M4.5 0.5h7l3 3v10h-10z" fill="#F6F8FC" stroke="#AE9252"/>
<path d="M0.5 3.5l3 2M0.5 7.5h3M0.5 11.5l3-2M9 3.5l-3 2M9 7.5h-3M9 11.5l-3-2" stroke="#333" stroke-width="0.9"/>
<ellipse cx="4.8" cy="2.5" rx="1.6" ry="1.8" fill="#3A3A3A"/><ellipse cx="4.8" cy="7" rx="1.8" ry="2.2" fill="#3A3A3A"/><ellipse cx="4.8" cy="11.5" rx="1.8" ry="2.2" fill="#3A3A3A"/>
<path d="M4.3 6v2M4.3 10.5v2" stroke="#888"/>
</svg>
<div class="t" style="left:70px;top:455px;">build.xml</div>
<svg class="abs" style="left:32px;top:469px" width="17" height="15" viewBox="0 0 17 15">
<defs><linearGradient id="pc" x1="0" y1="0" x2="0" y2="1"><stop offset="0" stop-color="#C4E2FF"/><stop offset="1" stop-color="#7EAAEC"/></linearGradient></defs>
<path d="M3.5 1.5h5.5l1 1.5h-7.5z" fill="#FCD8B8" stroke="#C8A090"/>
<path d="M2 4.5h12v8q0 1.5-1.5 1.5h-9q-1.5 0-1.5-1.5z" fill="url(#pc)" stroke="#1E48C0"/>
<path d="M0.5 4h15" stroke="#B89088" stroke-width="1.2"/>
<path d="M3 5h10" stroke="#2A60D0"/>
</svg>
<div class="t" style="left:51px;top:471px;">HelloWorld</div>
<svg class="abs" style="left:32px;top:485px" width="17" height="15" viewBox="0 0 17 15">
<defs><linearGradient id="pc" x1="0" y1="0" x2="0" y2="1"><stop offset="0" stop-color="#C4E2FF"/><stop offset="1" stop-color="#7EAAEC"/></linearGradient></defs>
<path d="M3.5 1.5h5.5l1 1.5h-7.5z" fill="#FCD8B8" stroke="#C8A090"/>
<path d="M2 4.5h12v8q0 1.5-1.5 1.5h-9q-1.5 0-1.5-1.5z" fill="url(#pc)" stroke="#1E48C0"/>
<path d="M0.5 4h15" stroke="#B89088" stroke-width="1.2"/>
<path d="M3 5h10" stroke="#2A60D0"/>
</svg>
<div class="t" style="left:51px;top:487px;">MovieReservation</div>
<div class="abs" style="left:10px;top:517px;width:82px;height:22px;border-radius:2px 0 0 0;background:linear-gradient(#FFFFFF,#F6F5EF 40%,#ECE9D8)"></div>
<div class="abs" style="left:92px;top:517px;width:1px;height:23px;background:#ACA899"></div>
<div class="abs" style="left:92px;top:539px;width:188px;height:1px;background:#ACA899"></div>
<svg class="abs" style="left:15px;top:520px" width="13" height="15" viewBox="0 0 13 15"><rect x="0.5" y="0.5" width="4" height="4" fill="#BCD8F8" stroke="#2A6AD0"/><rect x="0.5" y="9.5" width="4" height="4" fill="#BCD8F8" stroke="#2A6AD0"/><rect x="7.5" y="5.5" width="2" height="2" fill="#fff" stroke="#2A6AD0"/><path d="M6 3h6M10 6.5h2M6 12h6" stroke="#2A6AD0"/></svg>
<div class="t" style="left:32px;top:523px;">Outline</div>
<svg class="abs" style="left:75px;top:523px" width="10" height="10" viewBox="0 0 10 10"><path d="M1 1l8 8M9 1l-8 8" stroke="#8C8A80" stroke-width="3" stroke-linecap="square"/><path d="M1 1l8 8M9 1l-8 8" stroke="#fff" stroke-width="1.2"/></svg>
<svg class="abs" style="left:110px;top:520px" width="17" height="16" viewBox="0 0 17 16"><path d="M2.5 2v12M0.5 11.5l2 2.5 2-2.5" stroke="#555" fill="none"/><text x="6" y="8" font-family="Liberation Sans" font-weight="bold" font-size="11" fill="#2A8A6A">a</text><text x="8" y="16" font-family="Liberation Sans" font-weight="bold" font-size="11" fill="#A0289A">z</text></svg>
<svg class="abs" style="left:135px;top:520px" width="15" height="15" viewBox="0 0 15 15"><circle cx="7" cy="7.5" r="5.5" fill="#8EC4F0" stroke="#3A7ACC"/><path d="M5 5h4M7 5v5" stroke="#fff" stroke-width="1.6"/><path d="M0.5 0.5L14 14" stroke="#1A2A7A" stroke-width="1.3"/></svg>
<svg class="abs" style="left:158px;top:520px" width="15" height="15" viewBox="0 0 15 15"><circle cx="6" cy="9.5" r="3.5" fill="#9A9A9A" stroke="#707070"/><path d="M1 5L11 14" stroke="#1A2A7A" stroke-width="1.3"/><text x="9" y="7" font-family="Liberation Sans" font-weight="bold" font-size="8" fill="#2A5AC0">S</text></svg>
<svg class="abs" style="left:184px;top:524px" width="9" height="9" viewBox="0 0 9 9">
<defs><radialGradient id="gd" cx="0.45" cy="0.4" r="0.6"><stop offset="0" stop-color="#A8D8A8"/><stop offset="1" stop-color="#5AAE62"/></radialGradient></defs>
<circle cx="4" cy="4" r="3.6" fill="url(#gd)" stroke="#3E9A4E" stroke-width="0.9"/>
</svg>
<svg class="abs" style="left:204px;top:520px" width="15" height="15" viewBox="0 0 15 15"><circle cx="6" cy="9.5" r="3.5" fill="#9A9A9A" stroke="#707070"/><path d="M1 5L11 14" stroke="#1A2A7A" stroke-width="1.3"/><text x="10" y="7" font-family="Liberation Sans" font-weight="bold" font-size="8" fill="#2A5AC0">L</text></svg>
<svg class="abs" style="left:227px;top:521px" width="11" height="6" viewBox="0 0 11 6"><path d="M0.5 0.5h10l-5 5z" fill="#fff" stroke="#6F6E66"/></svg>
<div class="abs" style="left:246px;top:522px;width:10px;height:4px;border:1px solid #6F6E66;background:#fff"></div>
<div class="abs" style="left:264px;top:522px;width:10px;height:11px;border:1px solid #6F6E66;background:#fff"></div>
<div class="abs" style="left:265px;top:524px;width:8px;height:1px;background:#6F6E66"></div>
<div class="abs" style="left:10px;top:540px;width:269px;height:258px;border:2px solid #F3F1E6;border-top:2px solid #F3F1E6"></div>
<div class="abs" style="left:12px;top:542px;width:266px;height:254px;background:#fff"></div>
<div class="abs" style="left:11px;top:541px;width:250px;height:238px;overflow:hidden">
<div class="abs" style="left:12px;top:0px;width:1px;height:5px;background:repeating-linear-gradient(#A0A0A0 0 1px,transparent 1px 2px)"></div>
<div class="abs" style="left:37px;top:17px;width:1px;height:222px;background:repeating-linear-gradient(#A0A0A0 0 1px,transparent 1px 2px)"></div>
<div class="abs" style="left:39px;top:25px;width:11px;height:1px;background:repeating-linear-gradient(90deg,#A0A0A0 0 1px,transparent 1px 2px)"></div>
<div class="abs" style="left:39px;top:41px;width:11px;height:1px;background:repeating-linear-gradient(90deg,#A0A0A0 0 1px,transparent 1px 2px)"></div>
<div class="abs" style="left:39px;top:57px;width:11px;height:1px;background:repeating-linear-gradient(90deg,#A0A0A0 0 1px,transparent 1px 2px)"></div>
<div class="abs" style="left:39px;top:73px;width:11px;height:1px;background:repeating-linear-gradient(90deg,#A0A0A0 0 1px,transparent 1px 2px)"></div>
<div class="abs" style="left:39px;top:89px;width:11px;height:1px;background:repeating-linear-gradient(90deg,#A0A0A0 0 1px,transparent 1px 2px)"></div>
<div class="abs" style="left:39px;top:105px;width:11px;height:1px;background:repeating-linear-gradient(90deg,#A0A0A0 0 1px,transparent 1px 2px)"></div>
<div class="abs" style="left:39px;top:121px;width:11px;height:1px;background:repeating-linear-gradient(90deg,#A0A0A0 0 1px,transparent 1px 2px)"></div>
<div class="abs" style="left:39px;top:137px;width:11px;height:1px;background:repeating-linear-gradient(90deg,#A0A0A0 0 1px,transparent 1px 2px)"></div>
<div class="abs" style="left:39px;top:153px;width:11px;height:1px;background:repeating-linear-gradient(90deg,#A0A0A0 0 1px,transparent 1px 2px)"></div>
<div class="abs" style="left:39px;top:169px;width:11px;height:1px;background:repeating-linear-gradient(90deg,#A0A0A0 0 1px,transparent 1px 2px)"></div>
<div class="abs" style="left:39px;top:185px;width:11px;height:1px;background:repeating-linear-gradient(90deg,#A0A0A0 0 1px,transparent 1px 2px)"></div>
<div class="abs" style="left:39px;top:201px;width:11px;height:1px;background:repeating-linear-gradient(90deg,#A0A0A0 0 1px,transparent 1px 2px)"></div>
<div class="abs" style="left:39px;top:217px;width:11px;height:1px;background:repeating-linear-gradient(90deg,#A0A0A0 0 1px,transparent 1px 2px)"></div>
<div class="abs" style="left:39px;top:233px;width:11px;height:1px;background:repeating-linear-gradient(90deg,#A0A0A0 0 1px,transparent 1px 2px)"></div>
<div class="abs" style="left:18px;top:9px;width:8px;height:1px;background:repeating-linear-gradient(90deg,#A0A0A0 0 1px,transparent 1px 2px)"></div>
<svg class="abs" style="left:8px;top:5px" width="9" height="9" viewBox="0 0 9 9">
<rect x="0.5" y="0.5" width="8" height="8" fill="#F8F8F4" stroke="#A8A494"/>
<path d="M2 4.5h5" stroke="#000"/>
</svg>
<svg class="abs" style="left:26px;top:1px" width="14" height="13" viewBox="0 0 14 13"><circle cx="7.5" cy="6.5" r="6" fill="#3A9A4A" stroke="#2A7A36"/><path d="M10.2 4.2A3 3 0 1 0 10.2 8.8" stroke="#fff" stroke-width="2" fill="none"/></svg>
<svg class="abs" style="left:25px;top:8px" width="8" height="8" viewBox="0 0 8 8">
<path d="M4 0.5L7.5 7.5H0.5Z" fill="#F8D060" stroke="#B07A10" stroke-linejoin="round"/>
<path d="M4 2.5v2.5M4 6v1" stroke="#000"/>
</svg>
<div class="t" style="left:52px;top:3px;">BugTrack</div>
<svg class="abs" style="left:57px;top:23px" width="6" height="6" viewBox="0 0 6 6">
<rect x="0" y="0" width="5" height="5" fill="#D83A5A"/>
<rect x="1.5" y="1.5" width="2" height="2" fill="#FFFFFF"/>
</svg>
<svg class="abs" style="left:51px;top:25px" width="8" height="8" viewBox="0 0 8 8">
<path d="M4 0.5L7.5 7.5H0.5Z" fill="#F8D060" stroke="#B07A10" stroke-linejoin="round"/>
<path d="M4 2.5v2.5M4 6v1" stroke="#000"/>
</svg>
<div class="t" style="left:77px;top:19px;">engine : Engine</div>
<svg class="abs" style="left:57px;top:39px" width="6" height="6" viewBox="0 0 6 6">
<rect x="0" y="0" width="5" height="5" fill="#D83A5A"/>
<rect x="1.5" y="1.5" width="2" height="2" fill="#FFFFFF"/>
</svg>
<div class="t" style="left:77px;top:35px;">parameterMap : Map</div>
<svg class="abs" style="left:57px;top:55px" width="6" height="6" viewBox="0 0 6 6">
<rect x="0" y="0" width="5" height="5" fill="#D83A5A"/>
<rect x="1.5" y="1.5" width="2" height="2" fill="#FFFFFF"/>
</svg>
<div class="t" style="left:77px;top:51px;">facade : BugTrackServer</div>
<svg class="abs" style="left:55px;top:70px" width="9" height="9" viewBox="0 0 9 9">
<defs><radialGradient id="gd" cx="0.45" cy="0.4" r="0.6"><stop offset="0" stop-color="#A8D8A8"/><stop offset="1" stop-color="#5AAE62"/></radialGradient></defs>
<circle cx="4" cy="4" r="3.6" fill="url(#gd)" stroke="#3E9A4E" stroke-width="0.9"/>
</svg>
<div class="t" style="left:77px;top:67px;">setEngine(Engine)</div>
<svg class="abs" style="left:55px;top:86px" width="9" height="9" viewBox="0 0 9 9">
<defs><radialGradient id="gd" cx="0.45" cy="0.4" r="0.6"><stop offset="0" stop-color="#A8D8A8"/><stop offset="1" stop-color="#5AAE62"/></radialGradient></defs>
<circle cx="4" cy="4" r="3.6" fill="url(#gd)" stroke="#3E9A4E" stroke-width="0.9"/>
</svg>
<div class="t" style="left:77px;top:83px;">doMainStart(Object[])</div>
<svg class="abs" style="left:55px;top:102px" width="9" height="9" viewBox="0 0 9 9">
<defs><radialGradient id="gd" cx="0.45" cy="0.4" r="0.6"><stop offset="0" stop-color="#A8D8A8"/><stop offset="1" stop-color="#5AAE62"/></radialGradient></defs>
<circle cx="4" cy="4" r="3.6" fill="url(#gd)" stroke="#3E9A4E" stroke-width="0.9"/>
</svg>
<svg class="abs" style="left:51px;top:105px" width="8" height="8" viewBox="0 0 8 8">
<path d="M4 0.5L7.5 7.5H0.5Z" fill="#F8D060" stroke="#B07A10" stroke-linejoin="round"/>
<path d="M4 2.5v2.5M4 6v1" stroke="#000"/>
</svg>
<div class="t" style="left:77px;top:99px;">doShowBug(Object[])</div>
<svg class="abs" style="left:55px;top:118px" width="9" height="9" viewBox="0 0 9 9">
<circle cx="4" cy="4" r="2.2" fill="#fff" stroke="#3A9A4A" stroke-width="1.7"/>
</svg>
<div class="t" style="left:67px;top:109px;font-size:9px;color:#2A5AB0">F</div>
<div class="abs" style="left:76px;top:113px;width:106px;height:16px;background:#ECE9D8"></div>
<div class="t" style="left:77px;top:115px;">MENU1_SEARCH : int</div>
<svg class="abs" style="left:55px;top:134px" width="9" height="9" viewBox="0 0 9 9">
<circle cx="4" cy="4" r="2.2" fill="#fff" stroke="#3A9A4A" stroke-width="1.7"/>
</svg>
<div class="t" style="left:67px;top:125px;font-size:9px;color:#2A5AB0">F</div>
<div class="t" style="left:77px;top:131px;">MENU1_SUBMIT : int</div>
<svg class="abs" style="left:55px;top:150px" width="9" height="9" viewBox="0 0 9 9">
<defs><radialGradient id="gd" cx="0.45" cy="0.4" r="0.6"><stop offset="0" stop-color="#A8D8A8"/><stop offset="1" stop-color="#5AAE62"/></radialGradient></defs>
<circle cx="4" cy="4" r="3.6" fill="url(#gd)" stroke="#3E9A4E" stroke-width="0.9"/>
</svg>
<div class="t" style="left:77px;top:147px;">doMenu1()</div>
<svg class="abs" style="left:55px;top:166px" width="9" height="9" viewBox="0 0 9 9">
<defs><radialGradient id="gd" cx="0.45" cy="0.4" r="0.6"><stop offset="0" stop-color="#A8D8A8"/><stop offset="1" stop-color="#5AAE62"/></radialGradient></defs>
<circle cx="4" cy="4" r="3.6" fill="url(#gd)" stroke="#3E9A4E" stroke-width="0.9"/>
</svg>
<div class="t" style="left:77px;top:163px;">doMenu1FollowUp(Map&lt;String, String&gt; input)</div>
<svg class="abs" style="left:55px;top:182px" width="9" height="9" viewBox="0 0 9 9">
<defs><radialGradient id="gd" cx="0.45" cy="0.4" r="0.6"><stop offset="0" stop-color="#A8D8A8"/><stop offset="1" stop-color="#5AAE62"/></radialGradient></defs>
<circle cx="4" cy="4" r="3.6" fill="url(#gd)" stroke="#3E9A4E" stroke-width="0.9"/>
</svg>
<div class="t" style="left:77px;top:179px;">doShowBug()</div>
<svg class="abs" style="left:55px;top:198px" width="9" height="9" viewBox="0 0 9 9">
<defs><radialGradient id="gd" cx="0.45" cy="0.4" r="0.6"><stop offset="0" stop-color="#A8D8A8"/><stop offset="1" stop-color="#5AAE62"/></radialGradient></defs>
<circle cx="4" cy="4" r="3.6" fill="url(#gd)" stroke="#3E9A4E" stroke-width="0.9"/>
</svg>
<div class="t" style="left:77px;top:195px;">doShowBugFollowUp(Map&lt;String, String&gt; input)</div>
<svg class="abs" style="left:55px;top:213px" width="9" height="8" viewBox="0 0 9 8">
<path d="M4 1.2L6.8 6.3H1.2Z" fill="#fff" stroke="#2A5AC8" stroke-width="1.3" stroke-linejoin="round"/>
</svg>
<div class="t" style="left:77px;top:211px;">query10Listdata : List</div>
<svg class="abs" style="left:55px;top:230px" width="9" height="9" viewBox="0 0 9 9">
<defs><radialGradient id="gd" cx="0.45" cy="0.4" r="0.6"><stop offset="0" stop-color="#A8D8A8"/><stop offset="1" stop-color="#5AAE62"/></radialGradient></defs>
<circle cx="4" cy="4" r="3.6" fill="url(#gd)" stroke="#3E9A4E" stroke-width="0.9"/>
</svg>
<div class="t" style="left:77px;top:227px;">doQuery10()</div>
</div>
<div class="abs" style="left:261px;top:542px;width:16px;height:237px;background:linear-gradient(90deg,#F3F1EC,#FEFEFA 60%,#F0EEE6)"></div>
<div class="abs" style="left:262px;top:574px;width:15px;height:93px;border:1px solid #fff;border-radius:2px;background:linear-gradient(90deg,#C8D8FC,#B8CFFA 50%,#A9C2F5);box-shadow:inset -1px -1px 0 #9DB4E4"></div>
<div class="abs" style="left:266px;top:616px;width:7px;height:1px;background:#EEF4FE;box-shadow:1px 1px 0 #8CA8E0"></div>
<div class="abs" style="left:266px;top:618px;width:7px;height:1px;background:#EEF4FE;box-shadow:1px 1px 0 #8CA8E0"></div>
<div class="abs" style="left:266px;top:620px;width:7px;height:1px;background:#EEF4FE;box-shadow:1px 1px 0 #8CA8E0"></div>
<div class="abs" style="left:266px;top:622px;width:7px;height:1px;background:#EEF4FE;box-shadow:1px 1px 0 #8CA8E0"></div>
<div class="abs" style="left:262px;top:542px;width:15px;height:16px;border:1px solid #fff;border-radius:2px;background:linear-gradient(135deg,#D6E4FD,#B7CEFA 60%,#A8C2F6);box-shadow:inset -1px -1px 0 #A0B8E8"></div>
<svg class="abs" style="left:0;top:0" width="944" height="827"><path d="M266.0 552.0L269.5 548.5L273.0 552.0" stroke="#4D6185" stroke-width="2" fill="none"/></svg>
<div class="abs" style="left:262px;top:762px;width:15px;height:16px;border:1px solid #fff;border-radius:2px;background:linear-gradient(135deg,#D6E4FD,#B7CEFA 60%,#A8C2F6);box-shadow:inset -1px -1px 0 #A0B8E8"></div>
<svg class="abs" style="left:0;top:0" width="944" height="827"><path d="M266.0 768.0L269.5 771.5L273.0 768.0" stroke="#4D6185" stroke-width="2" fill="none"/></svg>
<div class="abs" style="left:12px;top:779px;width:249px;height:17px;background:linear-gradient(#F3F1EC,#FEFEFA 60%,#F0EEE6)"></div>
<div class="abs" style="left:12px;top:780px;width:16px;height:16px;border:1px solid #fff;border-radius:2px;background:linear-gradient(135deg,#D6E4FD,#B7CEFA 60%,#A8C2F6);box-shadow:inset -1px -1px 0 #A0B8E8"></div>
<svg class="abs" style="left:0;top:0" width="944" height="827"><path d="M22.0 784.5L18.5 788.0L22.0 791.5" stroke="#4D6185" stroke-width="2" fill="none"/></svg>
<div class="abs" style="left:29px;top:780px;width:165px;height:16px;border:1px solid #fff;border-radius:2px;background:linear-gradient(#C8D8FC,#B8CFFA 50%,#A9C2F5);box-shadow:inset -1px -1px 0 #9DB4E4"></div>
<div class="abs" style="left:107px;top:784px;width:1px;height:8px;background:#EEF4FE;box-shadow:1px 1px 0 #8CA8E0"></div>
<div class="abs" style="left:109px;top:784px;width:1px;height:8px;background:#EEF4FE;box-shadow:1px 1px 0 #8CA8E0"></div>
<div class="abs" style="left:111px;top:784px;width:1px;height:8px;background:#EEF4FE;box-shadow:1px 1px 0 #8CA8E0"></div>
<div class="abs" style="left:113px;top:784px;width:1px;height:8px;background:#EEF4FE;box-shadow:1px 1px 0 #8CA8E0"></div>
<div class="abs" style="left:244px;top:780px;width:16px;height:16px;border:1px solid #fff;border-radius:2px;background:linear-gradient(135deg,#D6E4FD,#B7CEFA 60%,#A8C2F6);box-shadow:inset -1px -1px 0 #A0B8E8"></div>
<svg class="abs" style="left:0;top:0" width="944" height="827"><path d="M250.0 784.5L253.5 788.0L250.0 791.5" stroke="#4D6185" stroke-width="2" fill="none"/></svg>
<div class="abs" style="left:261px;top:779px;width:16px;height:17px;background:#ECE9D8"></div>
<svg class="abs" style="left:291px;top:104px" width="12" height="14" viewBox="0 0 12 14">
<path d="M0.5 0.5h8l2.5 2.5v10.5h-10.5z" fill="#FFFFFF" stroke="#A8A88A"/>
<path d="M8.5 0.5v2.5h2.5" fill="#E8E8D8" stroke="#A8A88A"/>
<g fill="#3A6CC8"><rect x="3" y="2" width="3" height="1"/><rect x="2" y="3" width="1" height="4"/><rect x="3" y="7" width="3" height="1"/><rect x="6" y="5" width="1" height="2"/><rect x="5" y="5" width="1" height="1"/><rect x="6" y="3" width="1" height="1"/></g>
<g fill="#4A7CD8"><rect x="6" y="9" width="1" height="1"/><rect x="8" y="9" width="1" height="1"/><rect x="7" y="10" width="1" height="1"/><rect x="6" y="11" width="1" height="1"/><rect x="8" y="11" width="1" height="1"/></g>
</svg>
<div class="t" style="left:307px;top:106px;">BugTrack.cha</div>
<div class="abs" style="left:399px;top:100px;width:125px;height:25px;border-radius:2px 2px 0 0;background:linear-gradient(#0B4FD8,#1A63E6 35%,#2F7CF0 75%,#3C8CF5)"></div>
<svg class="abs" style="left:405px;top:104px" width="12" height="14" viewBox="0 0 12 14">
<path d="M0.5 0.5h8l2.5 2.5v10.5h-10.5z" fill="#EEF4FC" stroke="#A8863E"/>
<path d="M8.5 0.5v2.5h2.5" fill="#F4D68C" stroke="#C8A050"/>
<g fill="#2E5CB0"><rect x="6" y="3" width="1.5" height="7.5"/><rect x="3" y="10.5" width="3.5" height="1.5"/><rect x="2" y="8.5" width="1.5" height="2.5"/></g>
</svg>
<svg class="abs" style="left:402px;top:110px" width="8" height="8" viewBox="0 0 8 8">
<path d="M4 0.5L7.5 7.5H0.5Z" fill="#F8D060" stroke="#B07A10" stroke-linejoin="round"/>
<path d="M4 2.5v2.5M4 6v1" stroke="#000"/>
</svg>
<div class="t" style="left:422px;top:106px;color:#fff">*BugTrack.java</div>
<svg class="abs" style="left:506px;top:106px" width="11" height="10" viewBox="0 0 11 10"><path d="M1.5 1.5l7 7M8.5 1.5l-7 7" stroke="#5A5A50" stroke-width="4" stroke-linecap="square"/><path d="M1.5 1.5l7 7M8.5 1.5l-7 7" stroke="#fff" stroke-width="2" stroke-linecap="square"/></svg>
<div class="abs" style="left:900px;top:104px;width:10px;height:4px;border:1px solid #6F6E66;background:#fff"></div>
<div class="abs" style="left:918px;top:104px;width:10px;height:11px;border:1px solid #6F6E66;background:#fff"></div>
<div class="abs" style="left:919px;top:106px;width:8px;height:1px;background:#6F6E66"></div>
<div class="abs" style="left:285px;top:123px;width:649px;height:463px;border:2px solid #3C8CF5;background:#fff"></div>
<div class="abs" style="left:287px;top:125px;width:12px;height:459px;background:#ECE9D8"></div>
<div class="abs" style="left:287px;top:125px;width:12px;height:17px;background:repeating-conic-gradient(#3168D8 0 25%,#FFFFFF 0 50%) 0 0/2px 2px"></div>
<div class="abs" style="left:313px;top:125px;width:1px;height:442px;background:#EAE6D6"></div>
<div class="abs" style="left:314px;top:125px;width:589px;height:17px;background:#E8F2FE"></div>
<div class="abs" style="left:299px;top:328px;width:5px;height:2px;background:#000"></div>
<div class="abs" style="left:299px;top:362px;width:5px;height:2px;background:#000"></div>
<div class="abs" style="left:299px;top:430px;width:5px;height:2px;background:#000"></div>
<svg class="abs" style="left:304px;top:179px" width="9" height="9" viewBox="0 0 9 9"><circle cx="4.5" cy="4.5" r="4" fill="#E6EEF8" stroke="#A8B8CC"/><path d="M2.5 4.5h4" stroke="#7A8AA4"/></svg>
<svg class="abs" style="left:304px;top:434px" width="9" height="9" viewBox="0 0 9 9"><circle cx="4.5" cy="4.5" r="4" fill="#E6EEF8" stroke="#A8B8CC"/><path d="M2.5 4.5h4" stroke="#7A8AA4"/></svg>
<div class="abs" style="left:314px;top:125px;width:589px;height:442px;overflow:hidden">
<div class="m" style="left:0;top:1px">    <span class="k">public</span> <span class="k">final</span> <span class="k">int</span> <span class="f">MENU1_SEARCH</span> = 0;</div>
<div class="m" style="left:0;top:18px">    <span class="k">public</span> <span class="k">final</span> <span class="k">int</span> <span class="f">MENU1_SUBMIT</span> = 1;</div>
<div class="m" style="left:0;top:35px"></div>
<div class="m" style="left:0;top:52px">    <span class="k">public</span> Response doMenu1(){</div>
<div class="m" style="left:0;top:69px">        MessageRow row;</div>
<div class="m" style="left:0;top:86px">        Response response = <span class="k">new</span> Response();</div>
<div class="m" style="left:0;top:103px">        row = <span class="k">new</span> MessageRow();</div>
<div class="m" style="left:0;top:120px">        row.addMenu(0, MessageBase.<span class="f i">STYLE_BOLD</span>, <span class="s">"search bug"</span>, <span class="k">false</span>);</div>
<div class="m" style="left:0;top:137px">        response.addRow(row);</div>
<div class="m" style="left:0;top:154px">        row = <span class="k">new</span> MessageRow();</div>
<div class="m" style="left:0;top:171px">        row.addMenu(1, MessageBase.<span class="f i">STYLE_BOLD</span>, <span class="s">"submit a bug"</span>, <span class="k">false</span>);</div>
<div class="m" style="left:0;top:188px">        response.addRow(row);</div>
<div class="m" style="left:0;top:205px">        response.setText(<span class="s">"Bug-Track"</span>);</div>
<div class="m" style="left:0;top:222px">        <span class="f">parameterMap</span>.clear();</div>
<div class="m" style="left:0;top:239px">        response.setNextMethod(<span class="s">"doMenu1FollowUp"</span>);</div>
<div class="m" style="left:0;top:256px">        <span class="k">return</span> response;</div>
<div class="m" style="left:0;top:273px">    }</div>
<div class="m" style="left:0;top:290px"></div>
<div class="m" style="left:0;top:307px">    <span class="k">public</span> Response doMenu1FollowUp(Map&lt;String, String&gt; input){</div>
<div class="m" style="left:0;top:324px">        <span class="k">int</span> choice = Integer.<span class="i">parseInt</span>(input.get(<span class="s">"choice"</span>));</div>
<div class="m" style="left:0;top:341px">        <span class="f">parameterMap</span>.clear();</div>
<div class="m" style="left:0;top:358px"></div>
<div class="m" style="left:0;top:375px">        <span class="k">switch</span> (choice){</div>
<div class="m" style="left:0;top:392px">        <span class="k">case</span> <span class="f">MENU1_SEARCH</span>:</div>
<div class="m" style="left:0;top:409px">            <span class="k">return</span> doQuery10();</div>
<div class="m" style="left:0;top:426px">        <span class="k">case</span> <span class="f">MENU1_SUBMIT</span>:</div>
</div>
<div class="abs" style="left:354px;top:125px;width:2px;height:17px;background:#000"></div>
<div class="abs" style="left:903px;top:125px;width:15px;height:442px;background:linear-gradient(90deg,#F3F1EC,#FEFEFA 50%,#F0EEE6)"></div>
<div class="abs" style="left:903px;top:195px;width:15px;height:46px;border:1px solid #fff;border-radius:2px;background:linear-gradient(90deg,#C8D8FC,#B8CFFA 50%,#A9C2F5);box-shadow:inset -1px -1px 0 #9DB4E4"></div>
<div class="abs" style="left:907px;top:214px;width:7px;height:1px;background:#EEF4FE;box-shadow:1px 1px 0 #8CA8E0"></div>
<div class="abs" style="left:907px;top:216px;width:7px;height:1px;background:#EEF4FE;box-shadow:1px 1px 0 #8CA8E0"></div>
<div class="abs" style="left:907px;top:218px;width:7px;height:1px;background:#EEF4FE;box-shadow:1px 1px 0 #8CA8E0"></div>
<div class="abs" style="left:907px;top:220px;width:7px;height:1px;background:#EEF4FE;box-shadow:1px 1px 0 #8CA8E0"></div>
<div class="abs" style="left:903px;top:125px;width:15px;height:17px;border:1px solid #fff;border-radius:2px;background:linear-gradient(135deg,#D6E4FD,#B7CEFA 60%,#A8C2F6);box-shadow:inset -1px -1px 0 #A0B8E8"></div>
<svg class="abs" style="left:0;top:0" width="944" height="827"><path d="M907.0 135.5L910.5 132.0L914.0 135.5" stroke="#4D6185" stroke-width="2" fill="none"/></svg>
<div class="abs" style="left:903px;top:551px;width:15px;height:16px;border:1px solid #fff;border-radius:2px;background:linear-gradient(135deg,#D6E4FD,#B7CEFA 60%,#A8C2F6);box-shadow:inset -1px -1px 0 #A0B8E8"></div>
<svg class="abs" style="left:0;top:0" width="944" height="827"><path d="M907.0 557.0L910.5 560.5L914.0 557.0" stroke="#4D6185" stroke-width="2" fill="none"/></svg>
<div class="abs" style="left:314px;top:567px;width:589px;height:17px;background:linear-gradient(#F3F1EC,#FEFEFA 50%,#F0EEE6)"></div>
<div class="abs" style="left:314px;top:568px;width:16px;height:16px;border:1px solid #fff;border-radius:2px;background:linear-gradient(135deg,#D6E4FD,#B7CEFA 60%,#A8C2F6);box-shadow:inset -1px -1px 0 #A0B8E8"></div>
<svg class="abs" style="left:0;top:0" width="944" height="827"><path d="M324.0 572.5L320.5 576.0L324.0 579.5" stroke="#4D6185" stroke-width="2" fill="none"/></svg>
<div class="abs" style="left:331px;top:568px;width:354px;height:16px;border:1px solid #fff;border-radius:2px;background:linear-gradient(#C8D8FC,#B8CFFA 50%,#A9C2F5);box-shadow:inset -1px -1px 0 #9DB4E4"></div>
<div class="abs" style="left:504px;top:572px;width:1px;height:8px;background:#EEF4FE;box-shadow:1px 1px 0 #8CA8E0"></div>
<div class="abs" style="left:506px;top:572px;width:1px;height:8px;background:#EEF4FE;box-shadow:1px 1px 0 #8CA8E0"></div>
<div class="abs" style="left:508px;top:572px;width:1px;height:8px;background:#EEF4FE;box-shadow:1px 1px 0 #8CA8E0"></div>
<div class="abs" style="left:510px;top:572px;width:1px;height:8px;background:#EEF4FE;box-shadow:1px 1px 0 #8CA8E0"></div>
<div class="abs" style="left:885px;top:568px;width:17px;height:16px;border:1px solid #fff;border-radius:2px;background:linear-gradient(135deg,#D6E4FD,#B7CEFA 60%,#A8C2F6);box-shadow:inset -1px -1px 0 #A0B8E8"></div>
<svg class="abs" style="left:0;top:0" width="944" height="827"><path d="M891.5 572.5L895.0 576.0L891.5 579.5" stroke="#4D6185" stroke-width="2" fill="none"/></svg>
<div class="abs" style="left:287px;top:567px;width:27px;height:17px;background:#ECE9D8"></div>
<div class="abs" style="left:903px;top:567px;width:15px;height:17px;background:#ECE9D8"></div>
<div class="abs" style="left:918px;top:125px;width:14px;height:459px;background:#ECE9D8"></div>
<div class="abs" style="left:921px;top:129px;width:9px;height:9px;background:#F8C830;border:1px solid #7F7F7F"></div>
<div class="abs" style="left:919px;top:141px;width:12px;height:1px;background:#7F7A70"></div>
<div class="abs" style="left:921px;top:145px;width:9px;height:5px;background:#FFF8E0;border:1px solid #F0C860"></div>
<div class="abs" style="left:921px;top:154px;width:9px;height:5px;background:#F8E0A0;border:1px solid #F0C860"></div>
<div class="abs" style="left:921px;top:184px;width:9px;height:5px;background:#F8E0A0;border:1px solid #F0C860"></div>
<div class="abs" style="left:921px;top:330px;width:9px;height:5px;background:#F8E0A0;border:1px solid #F0C860"></div>
<div class="abs" style="left:921px;top:404px;width:9px;height:5px;background:#F8E0A0;border:1px solid #F0C860"></div>
<div class="abs" style="left:921px;top:457px;width:9px;height:5px;background:#F8E0A0;border:1px solid #F0C860"></div>
<div class="abs" style="left:921px;top:475px;width:9px;height:10px;background:repeating-linear-gradient(#F8E0A0 0 2px,#F0C860 2px 3px);border:1px solid #F0C860"></div>
<div class="abs" style="left:341px;top:591px;width:87px;height:22px;background:linear-gradient(#FFFFFF,#F6F5EF 40%,#ECE9D8)"></div>
<div class="abs" style="left:341px;top:591px;width:1px;height:23px;background:#ACA899"></div>
<div class="abs" style="left:427px;top:591px;width:1px;height:23px;background:#ACA899"></div>
<div class="abs" style="left:478px;top:591px;width:1px;height:23px;background:#ACA899"></div>
<div class="abs" style="left:517px;top:591px;width:1px;height:23px;background:#ACA899"></div>
<div class="abs" style="left:558px;top:591px;width:1px;height:23px;background:#ACA899"></div>
<div class="abs" style="left:613px;top:591px;width:1px;height:23px;background:#ACA899"></div>
<div class="abs" style="left:658px;top:591px;width:1px;height:23px;background:#ACA899"></div>
<div class="abs" style="left:285px;top:613px;width:56px;height:1px;background:#ACA899"></div>
<div class="abs" style="left:428px;top:613px;width:506px;height:1px;background:#ACA899"></div>
<div class="t" style="left:286px;top:597px;">Properties</div>
<svg class="abs" style="left:346px;top:596px" width="13" height="11" viewBox="0 0 13 11"><rect x="0.5" y="0.5" width="12" height="10" fill="#fff" stroke="#4A74C0"/><rect x="1" y="1" width="11" height="2" fill="#5A8AD8"/></svg>
<div class="t" style="left:364px;top:597px;">Servers</div>
<svg class="abs" style="left:410px;top:597px" width="10" height="10" viewBox="0 0 10 10"><path d="M1 1l8 8M9 1l-8 8" stroke="#8C8A80" stroke-width="3" stroke-linecap="square"/><path d="M1 1l8 8M9 1l-8 8" stroke="#fff" stroke-width="1.2"/></svg>
<div class="t" style="left:431px;top:597px;">Problems</div>
<div class="t" style="left:482px;top:597px;">Debug</div>
<div class="t" style="left:521px;top:597px;">Search</div>
<div class="t" style="left:562px;top:597px;">Hierarchy</div>
<div class="t" style="left:616px;top:597px;">Console</div>
<svg class="abs" style="left:858px;top:594px" width="14" height="16" viewBox="0 0 14 16"><defs><linearGradient id="sg" x1="0" y1="0" x2="0" y2="1"><stop offset="0" stop-color="#F8F8F8"/><stop offset="0.5" stop-color="#D8D8D8"/><stop offset="1" stop-color="#F0F0F0"/></linearGradient></defs><path d="M1.5 3q0-2 2-2h6q3 0 3 2v10q0 2-2 2h-7q-2 0-2-2z" fill="url(#sg)" stroke="#111"/><path d="M9 1.5q3 0 3 2v3z" fill="#E8E040"/><path d="M2.5 5h9M4 10h7" stroke="#B8B8B8"/><circle cx="4" cy="10" r="1" fill="none" stroke="#888"/><path d="M0 8v2M13.5 8v2" stroke="#111"/></svg>
<svg class="abs" style="left:881px;top:595px" width="11" height="6" viewBox="0 0 11 6"><path d="M0.5 0.5h10l-5 5z" fill="#fff" stroke="#6F6E66"/></svg>
<div class="abs" style="left:900px;top:595px;width:10px;height:4px;border:1px solid #6F6E66;background:#fff"></div>
<div class="abs" style="left:918px;top:595px;width:10px;height:11px;border:1px solid #6F6E66;background:#fff"></div>
<div class="abs" style="left:919px;top:597px;width:8px;height:1px;background:#6F6E66"></div>
<div class="abs" style="left:285px;top:614px;width:649px;height:184px;border:2px solid #F3F1E6"></div>
<div class="abs" style="left:287px;top:616px;width:645px;height:180px;background:#fff"></div>
<div class="abs" style="left:314px;top:632px;width:1px;height:89px;background:repeating-linear-gradient(#A0A0A0 0 1px,transparent 1px 2px)"></div>
<div class="abs" style="left:333px;top:648px;width:1px;height:57px;background:repeating-linear-gradient(#A0A0A0 0 1px,transparent 1px 2px)"></div>
<div class="abs" style="left:352px;top:664px;width:1px;height:25px;background:repeating-linear-gradient(#A0A0A0 0 1px,transparent 1px 2px)"></div>
<div class="abs" style="left:300px;top:624px;width:7px;height:1px;background:repeating-linear-gradient(90deg,#A0A0A0 0 1px,transparent 1px 2px)"></div>
<div class="abs" style="left:319px;top:640px;width:7px;height:1px;background:repeating-linear-gradient(90deg,#A0A0A0 0 1px,transparent 1px 2px)"></div>
<div class="abs" style="left:338px;top:656px;width:6px;height:1px;background:repeating-linear-gradient(90deg,#A0A0A0 0 1px,transparent 1px 2px)"></div>
<div class="abs" style="left:353px;top:672px;width:11px;height:1px;background:repeating-linear-gradient(90deg,#A0A0A0 0 1px,transparent 1px 2px)"></div>
<div class="abs" style="left:353px;top:688px;width:11px;height:1px;background:repeating-linear-gradient(90deg,#A0A0A0 0 1px,transparent 1px 2px)"></div>
<div class="abs" style="left:334px;top:704px;width:11px;height:1px;background:repeating-linear-gradient(90deg,#A0A0A0 0 1px,transparent 1px 2px)"></div>
<div class="abs" style="left:319px;top:720px;width:7px;height:1px;background:repeating-linear-gradient(90deg,#A0A0A0 0 1px,transparent 1px 2px)"></div>
<svg class="abs" style="left:291px;top:620px" width="9" height="9" viewBox="0 0 9 9">
<rect x="0.5" y="0.5" width="8" height="8" fill="#F8F8F4" stroke="#A8A494"/>
<path d="M2 4.5h5" stroke="#000"/>
</svg>
<svg class="abs" style="left:310px;top:636px" width="9" height="9" viewBox="0 0 9 9">
<rect x="0.5" y="0.5" width="8" height="8" fill="#F8F8F4" stroke="#A8A494"/>
<path d="M2 4.5h5" stroke="#000"/>
</svg>
<svg class="abs" style="left:329px;top:652px" width="9" height="9" viewBox="0 0 9 9">
<rect x="0.5" y="0.5" width="8" height="8" fill="#F8F8F4" stroke="#A8A494"/>
<path d="M2 4.5h5" stroke="#000"/>
</svg>
<svg class="abs" style="left:310px;top:716px" width="9" height="9" viewBox="0 0 9 9">
<rect x="0.5" y="0.5" width="8" height="8" fill="#F8F8F4" stroke="#A8A494"/>
<path d="M2 4.5h5" stroke="#000"/><path d="M4.5 2v5" stroke="#000"/>
</svg>
<div class="abs" style="left:325px;top:616px;width:74px;height:16px;background:#ECE9D8"></div>
<svg class="abs" style="left:307px;top:616px" width="14" height="17" viewBox="0 0 14 17"><path d="M1.5 3.5q0-2.5 3-2.5h4q3 0 3 2.5v10.5q0 1.5-1.5 1.5h-7q-1.5 0-1.5-1.5z" fill="#E8E8E8" stroke="#111"/><path d="M2.5 5.5h8" stroke="#fff"/><circle cx="4.5" cy="10.5" r="1.2" fill="none" stroke="#888"/><path d="M4 13.5h1M6 13.5h1" stroke="#888"/><circle cx="11" cy="14" r="2.6" fill="#2E9A3A"/></svg>
<div class="t" style="left:326px;top:618px;">localhost:8082</div>
<svg class="abs" style="left:326px;top:633px" width="15" height="15" viewBox="0 0 15 15"><circle cx="7.5" cy="7.5" r="7" fill="#3CA03C" stroke="#2A7A2A"/><circle cx="7.5" cy="7.5" r="5.2" fill="none" stroke="#fff" stroke-opacity="0.25"/><path d="M5.5 3.5L11 7.5L5.5 11.5Z" fill="#fff"/></svg>
<div class="t" style="left:345px;top:634px;">Bugtrack localhost:7777 (available: true)</div>
<svg class="abs" style="left:343px;top:648px" width="18" height="16" viewBox="0 0 18 16"><rect x="1.5" y="7.5" width="5" height="5" fill="#6AB4F0" stroke="#2A6AC0"/><path d="M4 7V3.5h5M7.5 1.5l2 2-2 2" stroke="#2A5AA0" fill="none"/><path d="M13 0.5l3 3-3 3-3-3z" fill="#F8B830" stroke="#C08010"/><path d="M13 7v5M11 10l2 2 2-2" stroke="#2A5AA0" fill="none"/><rect x="10.5" y="12.5" width="6" height="3" fill="#3AA040" stroke="#2A8030"/></svg>
<div class="t" style="left:365px;top:650px;">org.chatapps.bugtrack.BugTrack</div>
<svg class="abs" style="left:365px;top:666px" width="13" height="13" viewBox="0 0 13 13"><circle cx="7" cy="1.6" r="1.6" fill="#0A1A70"/><path d="M6.3 3.5L5 7.5" stroke="#0A0A30" stroke-width="2.4" stroke-linecap="round"/><path d="M6.3 4.3L8.5 5.5L10.8 3.8M5.8 4L3.8 5L3.2 6.5M5 7.5L7.2 9.2L7.6 12H10.5M5 7.5L3.2 10.2L0.8 10.6" stroke="#0A1A70" stroke-width="1.4" fill="none" stroke-linecap="round" stroke-linejoin="round"/></svg>
<div class="t" style="left:383px;top:666px;">main_start</div>
<svg class="abs" style="left:365px;top:682px" width="13" height="13" viewBox="0 0 13 13"><circle cx="7" cy="1.6" r="1.6" fill="#0A1A70"/><path d="M6.3 3.5L5 7.5" stroke="#0A0A30" stroke-width="2.4" stroke-linecap="round"/><path d="M6.3 4.3L8.5 5.5L10.8 3.8M5.8 4L3.8 5L3.2 6.5M5 7.5L7.2 9.2L7.6 12H10.5M5 7.5L3.2 10.2L0.8 10.6" stroke="#0A1A70" stroke-width="1.4" fill="none" stroke-linecap="round" stroke-linejoin="round"/></svg>
<div class="t" style="left:383px;top:682px;">starter10</div>
<svg class="abs" style="left:345px;top:696px" width="15" height="15" viewBox="0 0 15 15"><rect x="0.5" y="0.5" width="14" height="14" fill="#EEF6FF" stroke="#6A7AA8"/><rect x="1" y="1" width="13" height="2" fill="#4A78C0"/><path d="M0.5 3v11" stroke="#B8A070"/><circle cx="7.5" cy="6.5" r="2" fill="#2A5AB8"/><circle cx="4.5" cy="11" r="2" fill="#2A5AB8"/><circle cx="10.5" cy="11" r="2" fill="#2A5AB8"/><circle cx="7" cy="6" r="0.7" fill="#A8C8F8"/><circle cx="4" cy="10.5" r="0.7" fill="#A8C8F8"/><circle cx="10" cy="10.5" r="0.7" fill="#A8C8F8"/></svg>
<div class="t" style="left:364px;top:698px;">main</div>
<svg class="abs" style="left:326px;top:713px" width="15" height="15" viewBox="0 0 15 15"><circle cx="7.5" cy="7.5" r="7" fill="#B8BEB8" stroke="#909890"/><circle cx="7.5" cy="7.5" r="5.2" fill="none" stroke="#fff" stroke-opacity="0.25"/><path d="M5.5 3.5L11 7.5L5.5 11.5Z" fill="#fff"/></svg>
<div class="t" style="left:345px;top:714px;">movie localhost:7777 (available: false)</div>
<div class="abs" style="left:9px;top:801px;width:55px;height:22px;border:1px solid #ACA899;border-bottom:none;border-radius:5px 5px 0 0"></div>
<div class="abs" style="left:17px;top:805px;width:2px;height:2px;background:#6F6E66;box-shadow:1px 1px 0 #fff"></div>
<div class="abs" style="left:17px;top:809px;width:2px;height:2px;background:#6F6E66;box-shadow:1px 1px 0 #fff"></div>
<div class="abs" style="left:17px;top:813px;width:2px;height:2px;background:#6F6E66;box-shadow:1px 1px 0 #fff"></div>
<div class="abs" style="left:17px;top:817px;width:2px;height:2px;background:#6F6E66;box-shadow:1px 1px 0 #fff"></div>
<div class="abs" style="left:431px;top:802px;width:1px;height:20px;background:#ACA899"></div>
<div class="abs" style="left:432px;top:802px;width:1px;height:20px;background:#fff"></div>
<div class="abs" style="left:521px;top:802px;width:1px;height:20px;background:#ACA899"></div>
<div class="abs" style="left:522px;top:802px;width:1px;height:20px;background:#fff"></div>
<div class="abs" style="left:604px;top:802px;width:1px;height:20px;background:#ACA899"></div>
<div class="abs" style="left:605px;top:802px;width:1px;height:20px;background:#fff"></div>
<div class="abs" style="left:688px;top:802px;width:1px;height:20px;background:#ACA899"></div>
<div class="abs" style="left:689px;top:802px;width:1px;height:20px;background:#fff"></div>
<div class="t" style="left:437px;top:805px;">Writable</div>
<div class="t" style="left:526px;top:805px;">Smart Insert</div>
<div class="t" style="left:610px;top:805px;">37 : 6</div>
</body></html>
